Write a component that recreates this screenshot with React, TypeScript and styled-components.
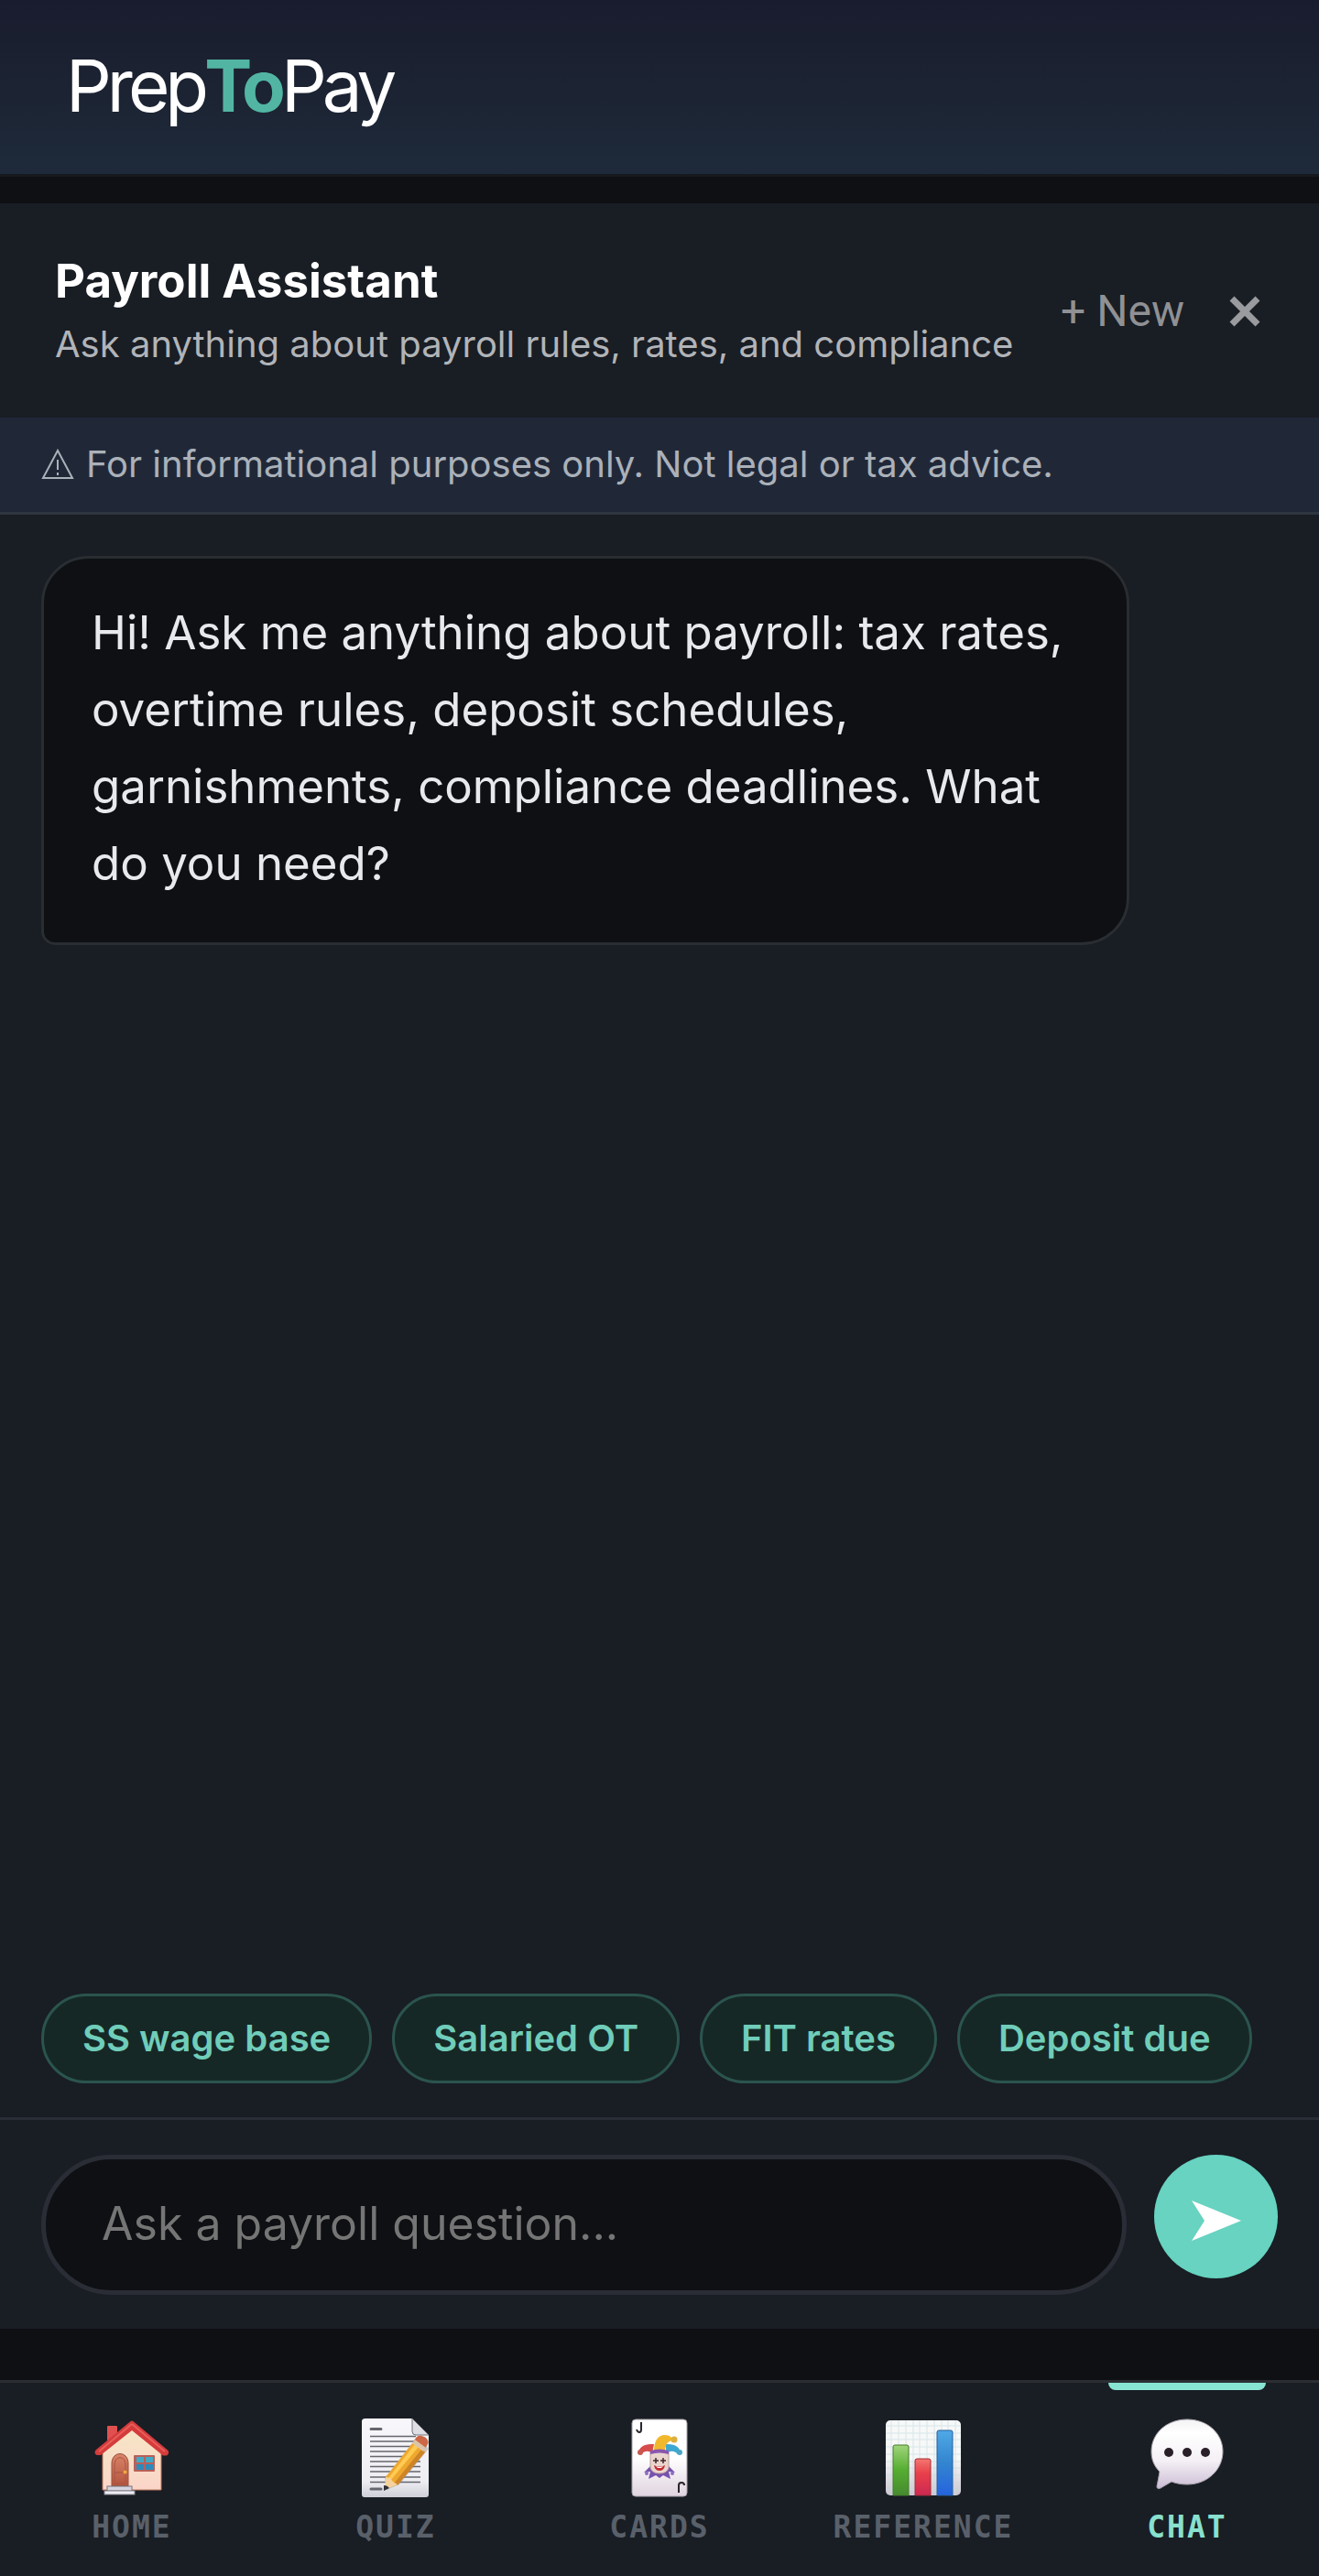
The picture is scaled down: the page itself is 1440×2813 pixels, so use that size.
import { useState } from "react";
import type { FormEvent, ReactNode } from "react";
import styled, { createGlobalStyle } from "styled-components";

const GlobalStyle = createGlobalStyle`
  * {
    box-sizing: border-box;
  }
  body {
    margin: 0;
    background-color: #0e1013;
    font-family: Inter, "Open Sans", sans-serif;
  }
  h1, h2, p {
    margin: 0;
  }
  button {
    border: 0;
    padding: 0;
    background: none;
    font-family: inherit;
    cursor: pointer;
  }
`;

const Page = styled.div`
  min-height: 100vh;
  display: flex;
  flex-direction: column;
`;

const Header = styled.header`
  padding: 43px 72px 45px;
  background: linear-gradient(180deg, #191c2f 0%, #1b2130 35%, #1e2a3a 100%);
  border-bottom: 3px solid #16191d;
`;

const Logo = styled.h1`
  color: #ffffff;
  font-size: 78px;
  line-height: 102px;
  font-weight: 400;
  letter-spacing: -5px;
  span {
    color: #52b5a4;
    font-weight: 700;
  }
`;

const Panel = styled.main`
  flex: 1;
  display: flex;
  flex-direction: column;
  margin: 29px 0 56px;
  background-color: #191d24;
`;

const PanelHeader = styled.div`
  display: flex;
  align-items: center;
  justify-content: space-between;
  padding: 50px 63px 46px 60px;
`;

const Title = styled.h2`
  color: #ffffff;
  font-size: 51px;
  line-height: 70px;
  font-weight: 700;
`;

const Subtitle = styled.p`
  color: #b1b4b8;
  font-size: 40px;
  line-height: 68px;
`;

const Actions = styled.div`
  display: flex;
  align-items: center;
  gap: 48px;
  padding-bottom: 3px;
`;

const NewButton = styled.button`
  color: #8f9194;
  font-family: Roboto, sans-serif;
  font-size: 48px;
  line-height: 56px;
`;

const CloseButton = styled.button`
  display: flex;
  svg {
    width: 36px;
    height: 36px;
  }
`;

const Notice = styled.p`
  display: flex;
  align-items: center;
  gap: 13px;
  padding: 17px 45px 18px;
  background-color: #202838;
  border-bottom: 3px solid #2e3642;
  color: #abb1b9;
  font-size: 40px;
  line-height: 68px;
  svg {
    width: 36px;
    height: 34px;
  }
`;

const Messages = styled.div`
  flex: 1;
  padding: 45px;
`;

const Bubble = styled.p`
  width: 88%;
  padding: 39px 52px 44px;
  background-color: #0e1013;
  border: 3px solid #2a2d31;
  border-radius: 52px 52px 52px 15px;
  color: #e8e9ed;
  font-size: 51px;
  line-height: 84px;
`;

const Chips = styled.div`
  display: flex;
  gap: 22px;
  padding: 0 45px 37px;
`;

const Chip = styled.button`
  padding: 0 42px;
  background-color: #162825;
  border: 3px solid #2b544e;
  border-radius: 49px;
  color: #6fcdba;
  font-size: 40px;
  line-height: 92px;
  font-weight: 600;
  white-space: nowrap;
`;

const Composer = styled.form`
  display: flex;
  align-items: flex-start;
  gap: 30px;
  padding: 38px 45px 37px;
  border-top: 3px solid #292d35;
`;

const Field = styled.input`
  flex: 1;
  min-width: 0;
  height: 153px;
  padding: 0 61px 4px;
  background-color: #0e1013;
  border: 5px solid #2a2d35;
  border-radius: 77px;
  outline: none;
  color: #e8e9ed;
  font-family: inherit;
  font-size: 50px;
  &::placeholder {
    color: #757575;
    opacity: 1;
  }
`;

const SendButton = styled.button`
  display: flex;
  align-items: center;
  justify-content: center;
  width: 135px;
  height: 135px;
  padding-top: 8px;
  border-radius: 50%;
  background-color: #67d3c0;
  svg {
    width: 56px;
    height: 46px;
  }
`;

const Nav = styled.nav`
  display: flex;
  background-color: #191d24;
  border-top: 3px solid #2b2e33;
`;

const Tab = styled.a<{ $active: boolean }>`
  position: relative;
  flex: 1;
  display: flex;
  flex-direction: column;
  align-items: center;
  gap: 10px;
  padding: 37px 0 32px;
  color: ${props => (props.$active ? "#88e0ce" : "#596069")};
  font-family: "DejaVu Sans Mono", monospace;
  font-size: 33px;
  line-height: 42px;
  font-weight: 700;
  letter-spacing: 2px;
  text-decoration: none;
  svg {
    width: 90px;
    height: 90px;
  }
  &::before {
    content: "";
    display: ${props => (props.$active ? "block" : "none")};
    position: absolute;
    top: 0;
    left: 20%;
    right: 20%;
    height: 8px;
    border-radius: 0 0 8px 8px;
    background-color: #88e4d2;
  }
`;

const HomeIcon = () => (
  <svg viewBox="0 0 90 90" aria-hidden="true">
    <defs>
      <linearGradient id="wall" x1="0" y1="0" x2="0" y2="1">
        <stop offset="0" stopColor="#f6e6c6" />
        <stop offset="1" stopColor="#fbd5c8" />
      </linearGradient>
      <linearGradient id="door" x1="0" y1="0" x2="0" y2="1">
        <stop offset="0" stopColor="#d98468" />
        <stop offset="1" stopColor="#b3543f" />
      </linearGradient>
    </defs>
    <rect x="18" y="10" width="11" height="18" rx="1" fill="#e0504f" />
    <path d="M13 38 45 12l32 26v42H13z" fill="url(#wall)" stroke="#b9775a" strokeWidth="1" />
    <path
      d="M45 4.500q1 0 2 1l37 31c2 2 1 5-1 6h-4L45 15 11 42H7c-3-1-3-4-1-6L43 5.500q1-1 2-1z"
      fill="#d43c3c"
    />
    <path d="M45 8 81 38M45 8 9 38" stroke="#ea5d5a" strokeWidth="2" fill="none" />
    <path d="M23 76V51c0-14 18-14 18 0v25z" fill="url(#door)" stroke="#97503c" strokeWidth="1" />
    <path d="M26 73V53c0-11 12-11 12 0v20zM26 61h12" fill="none" stroke="#a95442" strokeWidth="1" />
    <circle cx="37.500" cy="60.500" r="2" fill="#f0a93a" />
    <rect x="47" y="42" width="23" height="18" rx="1" fill="#b8605a" />
    <path d="M50 44h8v6h-8zM60 44h8v6h-8z" fill="#42aac4" />
    <path d="M50 52h8v6h-8zM60 52h8v6h-8z" fill="#2b8bbd" />
    <rect x="18" y="76" width="27" height="5" fill="#d5d5df" stroke="#77717c" strokeWidth="1" />
    <rect x="15" y="81" width="33" height="4" fill="#ececf4" stroke="#8b858c" strokeWidth="1" />
  </svg>
);

const QuizIcon = () => (
  <svg viewBox="0 0 90 90" aria-hidden="true">
    <defs>
      <linearGradient id="sheet" x1="0" y1="0" x2="0" y2="1">
        <stop offset="0" stopColor="#f8f8fc" />
        <stop offset="0.8" stopColor="#ededf2" />
        <stop offset="1" stopColor="#cfcfd8" />
      </linearGradient>
    </defs>
    <path d="M12 2h51l18 18v65q0 3-3 3H11q-3 0-3-3V5q0-3 4-3z" fill="url(#sheet)" />
    <path d="M63 2v14q0 4 4 4h14z" fill="#dedee4" stroke="#74747c" strokeWidth="1" />
    <path
      d="M17 21.500h50M17 27h55M17 32.500h55M17 38h55M17 43.500h55M17 49h55M17 54.500h55M17 60h55M17 66h55M17 71.500h55"
      stroke="#65656d"
      strokeWidth="1.500"
    />
    <path d="M18 13.500h11M18 79h11" stroke="#66666e" strokeWidth="3" strokeLinecap="round" />
    <path d="M33 66 35 80l14-6 32-39-4-5z" fill="#8c8580" opacity="0.4" />
    <path d="M34 66 63 29l14 9-30 36-13 5z" fill="#efa82f" />
    <path d="M37 67 66 30l4 3-31 37z" fill="#ffcb53" />
    <path d="m43 73 30-37 4 3-30 36z" fill="#ce8426" />
    <path d="m34 66 5 1 3 4 5 3-14 6z" fill="#f5d29c" />
    <path d="M32 75v6l6-3q-2-3-6-3z" fill="#303036" />
    <path d="m65 26 3-4c5-4 15 3 12 8l-3 5z" fill="#cc6845" />
    <path d="m63 29 3-4 12 9-3 4z" fill="#dbc4a8" />
  </svg>
);

const CardsIcon = () => (
  <svg viewBox="0 0 90 90" aria-hidden="true">
    <defs>
      <linearGradient id="card" x1="0" y1="0" x2="0" y2="1">
        <stop offset="0.5" stopColor="#ffffff" />
        <stop offset="1" stopColor="#dfd3df" />
      </linearGradient>
    </defs>
    <rect x="15" y="3" width="60" height="84" rx="4" fill="url(#card)" stroke="#a7a1a7" strokeWidth="1" />
    <path
      d="M25 6v8q0 3-2 3t-3-3M66 83v-8q0-3 3-3t3 3"
      fill="none"
      stroke="#29252b"
      strokeWidth="2"
    />
    <path d="M36 53 28 61l7-1-2 8 8-4 4 3 4-3 8 4-2-8 7 1-8-8z" fill="#7752ae" />
    <circle cx="31" cy="62" r="2" fill="#8f6cc2" />
    <circle cx="59" cy="62" r="2" fill="#8f6cc2" />
    <path d="M35 38h20v18q-2 6-10 6t-10-6z" fill="#e9d5ce" stroke="#b99e99" strokeWidth="1" />
    <path d="M22 39c2-8 8-9 17-9l-2 10c-4-3-8-3-12 1z" fill="#d64c4d" />
    <path d="M68 39c-2-8-8-9-17-9l2 10c4-3 8-3 12 1z" fill="#3ca8d1" />
    <path d="M39 37c0-10 4-17 12-17 5 0 8 3 9 6-6 0-9 5-9 11z" fill="#f2b82c" />
    <path d="M35 37q10-3 20 0v4q-10-3-20 0z" fill="#8957ad" />
    <circle cx="24" cy="39" r="3" fill="#c85851" />
    <circle cx="61" cy="25" r="3.500" fill="#ddb03e" />
    <circle cx="67" cy="39" r="3" fill="#4aa6c7" />
    <path d="M41 45v6M38 48h6M49 45v6M46 48h6" stroke="#40282a" strokeWidth="1.500" />
    <path d="M39 53q6 3 12 0-1 6-6 6t-6-6z" fill="#c42c34" />
    <path d="M41 54q4 2 8 0l-2 2h-4z" fill="#ffffff" />
  </svg>
);

const ReferenceIcon = () => (
  <svg viewBox="0 0 90 90" aria-hidden="true">
    <defs>
      <linearGradient id="grid" x1="0" y1="0" x2="0" y2="1">
        <stop offset="0.5" stopColor="#f7f8f8" />
        <stop offset="1" stopColor="#ccc6d1" />
      </linearGradient>
      <linearGradient id="green" x1="0" y1="0" x2="0" y2="1">
        <stop offset="0" stopColor="#a0d47c" />
        <stop offset="0.5" stopColor="#54ad30" />
        <stop offset="1" stopColor="#468a30" />
      </linearGradient>
      <linearGradient id="red" x1="0" y1="0" x2="0" y2="1">
        <stop offset="0" stopColor="#f57770" />
        <stop offset="0.4" stopColor="#e8404a" />
        <stop offset="1" stopColor="#cc2852" />
      </linearGradient>
      <linearGradient id="blue" x1="0" y1="0" x2="0" y2="1">
        <stop offset="0" stopColor="#50a9e5" />
        <stop offset="0.5" stopColor="#3385cf" />
        <stop offset="1" stopColor="#2563df" />
      </linearGradient>
    </defs>
    <rect x="4" y="4" width="82" height="82" rx="5" fill="url(#grid)" />
    <path
      d="M10 4v82M18 4v82M26 4v82M34 4v82M41 4v82M49 4v82M57 4v82M65 4v82M72 4v82M80 4v82M4 10h82M4 18h82M4 25h82M4 33h82M4 41h82M4 49h82M4 56h82M4 64h82M4 72h82M4 79h82"
      stroke="#c3dce0"
      strokeWidth="1"
      opacity="0.6"
    />
    <path d="M12 86V33q0-2 2-2h13q2 0 2 2v53z" fill="url(#green)" stroke="#447c2d" strokeWidth="1" />
    <path d="M36 86V48q0-2 2-2h13q2 0 2 2v38z" fill="url(#red)" stroke="#a32d37" strokeWidth="1" />
    <path d="M60 86V17q0-2 2-2h13q2 0 2 2v69z" fill="url(#blue)" stroke="#27619d" strokeWidth="1" />
  </svg>
);

const ChatIcon = () => (
  <svg viewBox="0 0 90 90" aria-hidden="true">
    <defs>
      <linearGradient id="balloon" x1="0" y1="0" x2="0" y2="1">
        <stop offset="0" stopColor="#f4f3f4" />
        <stop offset="0.2" stopColor="#ffffff" />
        <stop offset="0.6" stopColor="#f4f0f5" />
        <stop offset="1" stopColor="#cbbdd5" />
      </linearGradient>
    </defs>
    <path
      d="M45 3C23 3 6 18 6 38c0 9 3 16 9 22-1 6-2 11-3 16 0 3 2 3 4 2l12-7c5 2 11 3 17 3 22 0 39-16 39-36S67 3 45 3z"
      fill="url(#balloon)"
      stroke="#aaa4ad"
      strokeWidth="1"
    />
    <circle cx="25" cy="39" r="5" fill="#2a2027" />
    <circle cx="45" cy="39" r="5" fill="#2a2027" />
    <circle cx="65" cy="39" r="5" fill="#2a2027" />
  </svg>
);

interface ITab {
  id: string;
  label: string;
  icon: ReactNode;
}

const tabs: ITab[] = [
  { id: "home", label: "HOME", icon: <HomeIcon /> },
  { id: "quiz", label: "QUIZ", icon: <QuizIcon /> },
  { id: "cards", label: "CARDS", icon: <CardsIcon /> },
  { id: "reference", label: "REFERENCE", icon: <ReferenceIcon /> },
  { id: "chat", label: "CHAT", icon: <ChatIcon /> },
];

const suggestions = ["SS wage base", "Salaried OT", "FIT rates", "Deposit due"];

function App() {
  const [question, setQuestion] = useState("");
  const [activeTab, setActiveTab] = useState("chat");
  const onSubmit = (event: FormEvent) => {
    event.preventDefault();
    setQuestion("");
  };
  return (
    <>
      <GlobalStyle />
      <Page>
        <Header>
          <Logo>
            Prep<span>To</span>Pay
          </Logo>
        </Header>
        <Panel>
          <PanelHeader>
            <div>
              <Title>Payroll Assistant</Title>
              <Subtitle>Ask anything about payroll rules, rates, and compliance</Subtitle>
            </div>
            <Actions>
              <NewButton type="button" onClick={() => setQuestion("")}>
                + New
              </NewButton>
              <CloseButton type="button" aria-label="Close">
                <svg viewBox="0 0 36 36">
                  <path d="m4 4 28 28M32 4 4 32" stroke="#999b9e" strokeWidth="7" />
                </svg>
              </CloseButton>
            </Actions>
          </PanelHeader>
          <Notice>
            <svg viewBox="0 0 36 34" role="img" aria-label="Warning">
              <path
                d="M18 2 34 32H2zM18 12v11M18 26v3"
                fill="none"
                stroke="currentColor"
                strokeWidth="2"
              />
            </svg>
            For informational purposes only. Not legal or tax advice.
          </Notice>
          <Messages>
            <Bubble>
              Hi! Ask me anything about payroll: tax rates, overtime rules, deposit schedules,
              garnishments, compliance deadlines. What do you need?
            </Bubble>
          </Messages>
          <Chips>
            {suggestions.map(text => (
              <Chip key={text} type="button" onClick={() => setQuestion(text)}>
                {text}
              </Chip>
            ))}
          </Chips>
          <Composer onSubmit={onSubmit}>
            <Field
              type="text"
              aria-label="Ask a payroll question"
              placeholder="Ask a payroll question..."
              value={question}
              onChange={event => setQuestion(event.target.value)}
            />
            <SendButton type="submit" aria-label="Send">
              <svg viewBox="0 0 56 46">
                <path d="M1 1 55 23 1 45 15 23z" fill="#ffffff" />
              </svg>
            </SendButton>
          </Composer>
        </Panel>
        <Nav>
          {tabs.map(tab => (
            <Tab
              key={tab.id}
              href={`#${tab.id}`}
              $active={tab.id === activeTab}
              onClick={() => setActiveTab(tab.id)}
            >
              {tab.icon}
              {tab.label}
            </Tab>
          ))}
        </Nav>
      </Page>
    </>
  );
}
export default App;
